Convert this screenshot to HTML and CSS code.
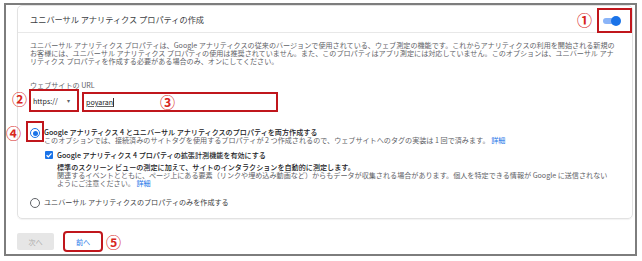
FILE: index.html
```html
<!DOCTYPE html>
<html lang="ja">
<head>
<meta charset="utf-8">
<title>ユニバーサル アナリティクス プロパティの作成</title>
<link rel="stylesheet" href="styles.css">
</head>
<body>
<div class="frame">
  <section class="card">
    <header class="card-head">
      <h1 class="title">ユニバーサル アナリティクス プロパティの作成</h1>
      <span class="num num-1">①</span>
      <span class="toggle-mark">
        <span class="toggle"><span class="knob"></span></span>
      </span>
    </header>
    <div class="card-body">
      <p class="desc">ユニバーサル アナリティクス プロパティは、Google アナリティクスの従来のバージョンで使用されている、ウェブ測定の機能です。これからアナリティクスの利用を開始される新規のお客様には、ユニバーサル アナリティクス プロパティの使用は推奨されていません。また、このプロパティはアプリ測定には対応していません。このオプションは、ユニバーサル アナリティクス プロパティを作成する必要がある場合のみ、オンにしてください。</p>
      <div class="label">ウェブサイトの URL</div>
      <div class="url-row">
        <div class="select">https://<span class="caret">▾</span><span class="num num-2">②</span></div>
        <div class="input"><span class="value">poyaran</span><span class="cursor"></span><span class="num num-3">③</span></div>
      </div>
      <div class="option option-first">
        <span class="radio-cell"><span class="radio checked"></span><span class="mark-box"></span><span class="num num-4">④</span></span>
        <p class="option-text"><span class="strong">Google アナリティクス 4 とユニバーサル アナリティクスのプロパティを両方作成する</span><br><span class="muted">このオプションでは、接続済みのサイトタグを使用するプロパティが 2 つ作成されるので、ウェブサイトへのタグの実装は 1 回で済みます。 <a class="link">詳細</a></span></p>
      </div>
      <div class="check-row">
        <span class="checkbox"><svg viewBox="0 0 8 8" width="8" height="8"><path d="M1.6 4.2 L3.3 5.8 L6.5 2.3" fill="none" stroke="#fff" stroke-width="1.2"/></svg></span>
        <span class="strong">Google アナリティクス 4 プロパティの拡張計測機能を有効にする</span>
      </div>
      <p class="check-desc"><span class="strong">標準のスクリーン ビューの測定に加えて、サイトのインタラクションを自動的に測定します。</span><br><span class="muted">関連するイベントとともに、ページ上にある要素（リンクや埋め込み動画など）からもデータが収集される場合があります。個人を特定できる情報が Google に送信されないようにご注意ください。 <a class="link">詳細</a></span></p>
      <div class="option option-second">
        <span class="radio-cell"><span class="radio"></span></span>
        <p class="option-text plain">ユニバーサル アナリティクスのプロパティのみを作成する</p>
      </div>
    </div>
  </section>
  <div class="actions">
    <button class="btn btn-disabled" type="button">次へ</button>
    <button class="btn btn-back" type="button">前へ</button>
    <span class="num num-5">⑤</span>
  </div>
</div>
</body>
</html>
```
FILE: styles.css
```css
* { box-sizing: border-box; }
html, body { margin: 0; padding: 0; background: #ffffff; }
body {
  font-family: "Noto Sans CJK JP", "Noto Sans", sans-serif;
  font-size: 7.1px;
  line-height: 8px;
  color: #5f6368;
  width: 642px;
  height: 261px;
  overflow: hidden;
}
p { margin: 0; }
.frame {
  margin: 3px 0 0 4px;
  width: 633px;
  height: 253px;
  border: 2px solid #7d7d7d;
  padding: 0 2px 0 11px;
}
.card {
  height: 214px;
  border: 1px solid #e2e2e2;
  border-radius: 5px;
  box-shadow: 0 1px 1px rgba(0,0,0,0.05);
}
.card-head {
  display: flex;
  align-items: center;
  height: 27px;
  border-bottom: 1px solid #e8e8e8;
  padding-left: 12px;
}
.title {
  flex: 1;
  margin: 0;
  font-size: 8.2px;
  line-height: 10px;
  font-weight: 400;
  color: #3c4043;
}
.num {
  font-family: "Noto Sans CJK JP", "DejaVu Sans", sans-serif;
  font-size: 15px;
  line-height: 15px;
  font-weight: 700;
  color: #d8261d;
}
.num-1 { margin-right: 5px; }
.toggle-mark {
  align-self: flex-end;
  margin-bottom: -1px;
  width: 35px;
  height: 25px;
  border: 2px solid #c0161c;
  display: flex;
  align-items: center;
  padding-left: 4px;
}
.toggle {
  position: relative;
  width: 18px;
  height: 10px;
}
.toggle::before {
  content: "";
  position: absolute;
  left: 0;
  top: 2px;
  width: 16px;
  height: 6px;
  border-radius: 3px;
  background: #8ab4f8;
}
.knob {
  position: absolute;
  right: 0;
  top: 0;
  width: 10px;
  height: 10px;
  border-radius: 50%;
  background: #1a73e8;
}
.card-body {
  padding: 8px 14px 0 12px;
}
.label { margin-top: 16px; }
.url-row {
  display: flex;
  align-items: flex-end;
  margin-left: -1px;
  gap: 3px;
}
.select {
  position: relative;
  width: 50px;
  height: 23px;
  border: 2px solid #c0161c;
  display: flex;
  align-items: center;
  padding-left: 2px;
  color: #202124;
}
.caret {
  margin-left: 9px;
  font-size: 6px;
  color: #5f6368;
}
.num-2 { position: absolute; left: -19px; top: 0; }
.input {
  position: relative;
  width: 196px;
  height: 20px;
  border: 2px solid #c0161c;
  display: flex;
  align-items: center;
  padding-left: 2px;
  color: #202124;
}
.value {
  text-decoration: underline;
  text-decoration-color: #666;
}
.cursor {
  width: 1px;
  height: 9px;
  background: #333;
}
.num-3 { position: absolute; left: 76px; top: 0; }
.option {
  display: flex;
  align-items: flex-start;
  gap: 2px;
  margin-left: -2px;
}
.option-first { margin-top: 16px; }
.option-second { margin-top: 11px; }
.radio-cell {
  position: relative;
  width: 14px;
  height: 8px;
  flex: none;
  display: flex;
  align-items: center;
  justify-content: center;
}
.radio {
  position: relative;
  top: 1px;
  width: 10px;
  height: 10px;
  flex: none;
  border-radius: 50%;
  border: 1.3px solid #5f6368;
}
.radio.checked { border-color: #1a73e8; }
.radio.checked::after {
  content: "";
  position: absolute;
  left: 50%;
  top: 50%;
  width: 5px;
  height: 5px;
  margin: -2.5px 0 0 -2.5px;
  border-radius: 50%;
  background: #1a73e8;
}
.mark-box {
  position: absolute;
  left: -2px;
  top: -7px;
  width: 18px;
  height: 21px;
  border: 2px solid #c0161c;
}
.num-4 { position: absolute; left: -22px; top: -3px; }
.strong { color: #202124; font-weight: 500; }
.plain { color: #3c4043; }
.muted { color: #5f6368; }
.link { color: #1a73e8; text-decoration: none; }
.check-row {
  display: flex;
  align-items: center;
  gap: 4px;
  margin: 7px 0 0 15px;
}
.checkbox {
  width: 8px;
  height: 8px;
  flex: none;
  background: #1a73e8;
  border-radius: 1px;
  display: flex;
}
.check-desc {
  margin-top: 4px;
  padding: 0 5px 0 27px;
}
.actions {
  display: flex;
  align-items: center;
  margin-top: 14px;
}
.btn {
  font: inherit;
  height: 17px;
  border: none;
  border-radius: 2px;
  padding: 0;
  display: flex;
  align-items: center;
  justify-content: center;
}
.btn-disabled {
  width: 37px;
  background: #e6e6e6;
  color: #ababab;
}
.btn-back {
  width: 36px;
  margin-left: 11px;
  background: transparent;
  color: #1a73e8;
  outline: 2px solid #c0161c;
}
.num-5 { margin-left: 5px; }
```
